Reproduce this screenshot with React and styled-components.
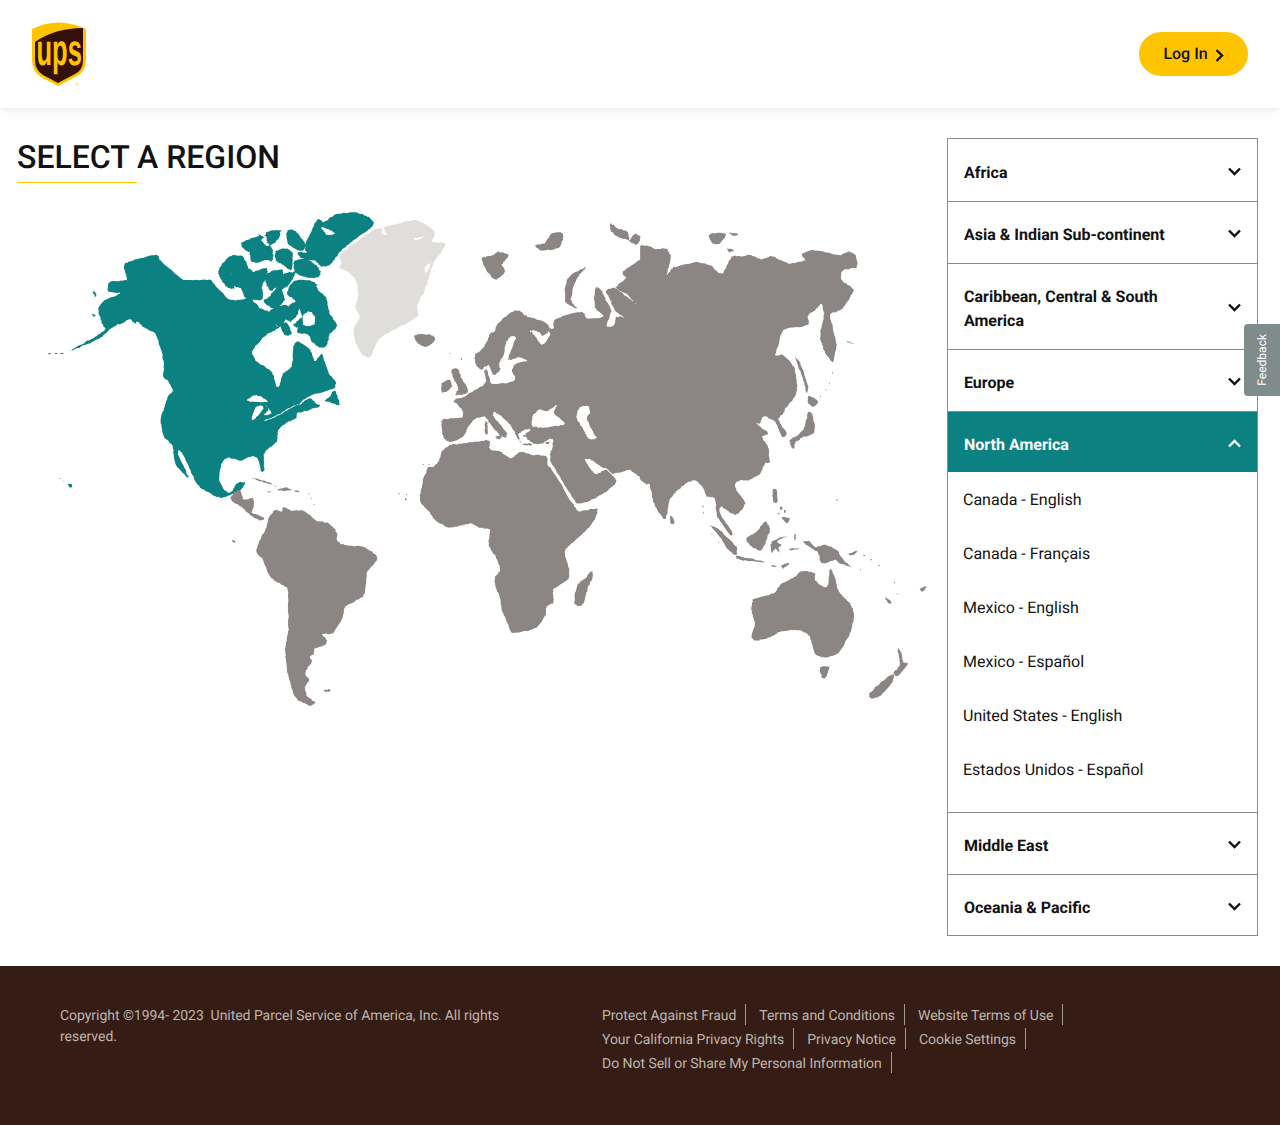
import React from "react";
import styled, { createGlobalStyle } from "styled-components";

const Global = createGlobalStyle`
  html, body { margin: 0; padding: 0; background: #fff; }
  body { font-family: Roboto, "Liberation Sans", sans-serif; color: #121212; text-rendering: geometricPrecision; }
  * { box-sizing: border-box; }
`;

const Page = styled.div`
  position: relative;
  width: 100%;
`;
const Header = styled.header`
  height: 108px;
  padding: 0 32px;
  display: flex;
  align-items: center;
  justify-content: space-between;
  background: #fff;
  box-shadow: 0 2px 8px rgba(0, 0, 0, 0.09);
`;
const Logo = styled.svg`
  display: block;
  width: 56px;
  height: 68px;
`;
const LoginButton = styled.a`
  width: 109px;
  height: 44px;
  border-radius: 22px;
  background: #ffc400;
  display: flex;
  align-items: center;
  justify-content: center;
  gap: 7px;
  font-size: 16px;
  font-weight: 500;
  color: #121212;
  padding-bottom: 2px;
  svg { margin-top: 5px; }
`;
const Main = styled.main`
  display: flex;
  justify-content: space-between;
  padding: 30px 22px 30px 17px;
`;
const MapColumn = styled.section`
  width: 920px;
`;
const Title = styled.h1`
  margin: 0 0 22px;
  font-size: 32px;
  line-height: 38px;
  font-weight: 500;
  color: #121212;
  &::after {
    content: "";
    display: block;
    width: 120px;
    height: 1px;
    background: #ffc400;
    margin-top: 6px;
  }
`;
const WorldMap = styled.svg`
  display: block;
  width: 920px;
  height: 510px;
`;
const Accordion = styled.div`
  width: 311px;
  border: 1px solid #8c8c8c;
`;
const ItemHead = styled.div`
  display: flex;
  align-items: center;
  justify-content: space-between;
  padding: ${(p) => p.$top}px 16px ${(p) => p.$bottom}px;
  background: ${(p) => (p.$open ? "#0b8181" : "#fff")};
  color: ${(p) => (p.$open ? "#fff" : "#121212")};
  border-bottom: ${(p) => (p.$open || p.$last ? "0" : "1px solid #8c8c8c")};
`;
const ItemLabel = styled.span`
  font-size: 16px;
  font-weight: 700;
  line-height: 24px;
  padding-right: 30px;
`;
const Chevron = styled.svg`
  flex: none;
  width: 13px;
  height: 9px;
  margin: 0 0 4px 0;
`;
const Countries = styled.ul`
  list-style: none;
  margin: 0;
  padding: 0 15px 16px;
  border-bottom: 1px solid #8c8c8c;
`;
const Country = styled.li`
  height: 54px;
  display: flex;
  align-items: center;
  font-size: 16px;
  color: #121212;
`;
const Feedback = styled.div`
  position: absolute;
  right: 0;
  top: 324px;
  width: 36px;
  height: 72px;
  background: #7f8c8b;
  border-radius: 4px 0 0 4px;
  display: flex;
  align-items: center;
  justify-content: center;
  color: #fff;
  font-size: 12px;
  span {
    writing-mode: vertical-rl;
    transform: rotate(180deg);
  }
`;
const Footer = styled.footer`
  height: 159px;
  background: #351c15;
  padding: 38px 60px 0;
  display: flex;
  color: #bdb5ae;
  font-size: 14px;
  letter-spacing: -0.04px;
`;
const Copyright = styled.p`
  margin: 2px 92px 0 0;
  width: 450px;
  line-height: 21px;
  white-space: pre-wrap;
`;
const FooterLinks = styled.nav`
  width: 618px;
  display: flex;
  flex-direction: column;
  gap: 3px;
`;
const FooterRow = styled.div`
  display: flex;
`;
const FooterLink = styled.a`
  height: 21px;
  padding-top: 2px;
  line-height: 21px;
  padding-right: 9px;
  margin-right: 13px;
  border-right: 1px solid #a39a94;
`;

/* ---- map data: every outline is traced, then softened so coasts look natural ---- */
let seed = 7;
const rand = () => {
  seed = (seed * 16807) % 2147483647;
  return seed / 2147483647 - 0.5;
};
const dist = (p, q) => Math.hypot(p[0] - q[0], p[1] - q[1]);
const subdivide = (pts, w0) => {
  const n = pts.length;
  const out = [];
  for (let i = 0; i < n; i++) {
    const a = pts[(i - 1 + n) % n], b = pts[i], c = pts[(i + 1) % n], e = pts[(i + 2) % n];
    const w = dist(a, b) < 70 && dist(b, c) < 70 && dist(c, e) < 70 ? w0 : 0;
    out.push(b);
    out.push([
      (0.5 + w) * (b[0] + c[0]) - w * (a[0] + e[0]),
      (0.5 + w) * (b[1] + c[1]) - w * (a[1] + e[1]),
    ]);
  }
  return out;
};
const soften = (d) => {
  if (!d.includes("L")) return d;
  return d
    .split(/(?=M)/)
    .map((sub) => {
      const nums = sub.match(/-?\d+(\.\d+)?/g).map(Number);
      let pts = [];
      for (let i = 0; i + 1 < nums.length; i += 2) pts.push([nums[i], nums[i + 1]]);
      pts = subdivide(pts, 0.05);
      pts = subdivide(pts, 0.05);
      pts = subdivide(pts, 0).map((p) => [p[0] + rand() * 3.2, p[1] + rand() * 3.2]);
      return "M" + pts.map((p) => p[0].toFixed(1) + "," + p[1].toFixed(1)).join(" L") + " Z";
    })
    .join(" ");
};

const F = "translate(20 200) scale(.33333)";
const A = "translate(400 320) scale(.33333)";
const B = "translate(400 200) scale(.345 .33333)";
const C = "translate(640 230) scale(.33333)";
const D = "translate(640 470) scale(.33333)";
const E = "translate(220 470) scale(.33333)";

const GREY = "#8b8584";
const TEAL = "#0b8181";
const WHITE = "#fff";
const ICE = "#e0deda";

const layers = [
  { t: A, fill: GREY, d: [
    "M150,365 L130,352 L125,320 L130,298 L185,293 L184,265 L160,242 L190,232 L205,222 L245,198 L258,182 L252,155 L262,150 L270,185 L285,192 L345,182 L335,150 L352,128 L382,122 L355,112 L325,120 L335,85 L347,55 L335,48 L320,65 L312,100 L298,130 L300,150 L280,165 L265,135 L245,148 L228,135 L225,105 L245,90 L262,60 L272,36 L800,36 L800,480 L720,470 L690,450 L640,462 L620,445 L605,442 L575,420 L556,418 L570,445 L590,462 L618,450 L650,482 L625,510 L590,532 L532,552 L500,505 L455,430 L450,418 L452,398 L460,362 L445,358 L425,372 L395,368 L375,345 L392,330 L375,328 L355,345 L365,370 L350,350 L335,320 L300,285 L282,277 L283,295 L318,335 L318,352 L300,345 L270,312 L255,290 L225,296 L205,320 L190,350 Z",
    "M150,375 L190,370 L260,360 L270,365 L270,388 L300,395 L335,415 L360,395 L400,405 L438,408 L445,440 L470,490 L505,535 L530,570 L545,578 L588,567 L585,600 L100,590 L62,545 L72,520 L68,490 L75,465 L115,425 L125,395 Z",
    "M42,48 L60,42 L95,45 L105,58 L95,72 L75,80 L55,70 L48,62 Z",
    "M155,150 L172,145 L185,175 L205,210 L195,222 L165,225 L175,205 L160,175 Z",
    "M125,190 L150,180 L155,200 L140,215 L125,215 Z",
    "M285,350 L305,350 L298,359 Z",
    "M255,308 L262,308 L263,340 L255,340 Z",
    "M370,371 L395,371 L395,375 L370,375 Z",
    "M435,368 L450,365 L445,373 Z",
    "M360,325 h8 v7 h-8z M370,345 h6 v5 h-6z M382,355 h4 v4 h-4z M148,98 h3 v3 h-3z M183,115 h3 v4 h-3z M68,432 h4 v2 h-4z M85,432 h4 v2 h-4z M15,535 h3 v3 h-3z",
  ]},
  { t: B, fill: GREY, d: [
    "M268,405 L285,370 L320,338 L345,332 L370,350 L420,365 L435,385 L445,385 L445,365 L465,350 L530,335 L540,355 L590,350 L565,320 L565,265 L582,268 L597,300 L612,335 L598,378 L620,376 L628,350 L650,352 L622,330 L606,290 L596,272 L622,264 L650,284 L685,312 L655,282 L625,262 L655,235 L645,215 L700,175 L700,140 L720,138 L745,150 L770,145 L785,175 L770,230 L800,260 L900,300 L900,405 Z",
    "M530,205 L538,205 L510,240 L495,300 L515,325 L490,315 L478,300 L485,235 Z",
    "M238,175 L270,165 L285,155 L315,165 L295,195 L305,215 L275,240 L245,200 Z",
    "M392,135 L420,130 L440,100 L472,100 L465,140 L430,150 L405,150 Z",
    "M610,70 L630,85 L660,95 L665,120 L680,100 L698,112 L685,135 L660,120 L630,110 L610,90 Z",
  ]},
  { t: C, fill: GREY, d: [
    "M0,50 L5,45 L35,60 L70,55 L90,80 L80,135 L100,112 L170,95 L210,105 L245,132 L275,80 L300,80 L330,75 L365,88 L395,78 L445,100 L490,92 L500,95 L485,72 L515,60 L600,75 L625,65 L645,75 L650,112 L610,120 L605,150 L640,180 L615,225 L600,240 L570,255 L590,345 L580,400 L550,355 L540,320 L552,250 L545,220 L525,240 L505,255 L505,285 L430,300 L405,375 L430,375 L450,395 L465,420 L472,470 L465,500 L440,530 L430,550 L415,570 L440,610 L425,620 L405,575 L370,560 L360,580 L348,580 L385,610 L365,620 L385,650 L390,700 L0,700 Z",
    "M465,380 L480,395 L505,470 L500,490 L490,450 Z",
    "M505,495 L535,515 L520,530 L505,520 Z",
    "M505,545 L520,560 L522,610 L490,620 L460,640 L450,630 L490,600 Z",
    "M450,640 L465,635 L460,658 Z",
    "M205,15 L240,8 L258,15 L240,40 L220,40 Z",
    "M268,8 L295,12 L280,18 Z",
    "M262,55 L282,62 L268,66 Z",
    "M620,333 L642,341 L625,338 Z",
    "M576,425 h2 v6 h-2z M568,458 h2 v5 h-2z M556,478 h3 v3 h-3z M540,498 h3 v3 h-3z",
  ]},
  { t: D, fill: GREY, d: [
    "M0,25 L20,42 L30,45 L40,95 L65,140 L78,145 L90,90 L125,50 L165,30 L190,55 L200,80 L225,85 L232,140 L270,195 L276,185 L240,130 L245,110 L285,135 L315,100 L290,60 L285,40 L305,30 L325,30 L360,10 L385,-40 L0,-40 Z",
    "M90,135 L100,145 L103,160 L92,160 Z",
    "M210,165 L240,180 L290,230 L290,255 L265,240 L235,195 Z",
    "M290,258 L340,268 L385,278 L340,275 L295,268 Z",
    "M395,285 L410,289 L400,291 Z M425,285 L450,280 L430,295 Z",
    "M318,205 L350,185 L375,155 L390,175 L385,195 L365,240 L335,230 Z",
    "M395,215 L440,198 L410,215 L425,225 L415,235 L420,250 L405,235 L395,250 Z",
    "M398,60 L410,60 L412,95 L400,95 Z",
    "M425,140 L450,145 L440,160 Z",
    "M490,215 L510,215 L525,232 L555,225 L590,240 L610,270 L635,292 L600,280 L585,270 L545,280 L535,250 L515,235 Z",
    "M462,195 L468,195 L465,215 Z M448,237 L480,235 L455,241 Z",
    "M625,252 L655,240 L640,256 Z",
    "M735,380 L755,398 L745,400 Z",
    "M840,358 L860,348 L848,365 Z",
    "M338,395 L345,385 L400,370 L420,345 L465,320 L485,303 L525,310 L525,330 L560,352 L572,295 L590,345 L600,370 L630,400 L642,435 L630,490 L595,550 L550,562 L525,550 L510,500 L490,485 L465,480 L420,485 L395,500 L350,512 L335,500 L345,460 L335,425 Z",
    "M540,592 L568,592 L555,625 L545,620 Z",
    "M772,535 L785,550 L790,578 L805,578 L790,600 L770,620 L762,605 L780,585 Z",
    "M760,612 L755,640 L720,678 L695,685 L688,672 L720,640 Z",
    "M420,110 h7 v9 h-7z M432,120 h5 v8 h-5z M414,128 h4 v5 h-4z M590,88 h3 v5 h-3z M660,298 h3 v3 h-3z M715,285 h4 v3 h-4z M762,335 h3 v5 h-3z M770,370 h3 v3 h-3z M188,105 h2 v8 h-2z M190,125 h2 v6 h-2z M215,190 h2 v4 h-2z M235,215 h2 v4 h-2z M670,255 h6 v3 h-6z M690,268 h5 v3 h-5z",
  ]},
  { t: E, fill: GREY, d: [
    "M600,90 L610,30 L625,-10 L990,-10 L1060,105 L1075,125 L1130,115 L1125,145 L1100,180 L1060,215 L1035,245 L1045,290 L1045,325 L1000,360 L1002,395 L980,410 L975,440 L945,475 L905,485 L875,488 L865,465 L845,420 L840,385 L825,345 L825,320 L840,300 L830,265 L805,225 L810,180 L775,172 L755,160 L715,168 L685,172 L645,150 L625,120 Z",
    "M1115,303 L1118,325 L1105,350 L1090,400 L1075,408 L1063,395 L1072,345 L1095,325 Z",
    "M140,170 L145,145 L165,120 L185,125 L190,112 L215,122 L250,122 L290,152 L325,160 L350,185 L350,205 L362,222 L400,228 L435,232 L472,262 L455,290 L440,310 L435,370 L415,388 L375,410 L370,435 L340,490 L305,490 L320,510 L315,525 L285,535 L282,552 L268,560 L275,575 L255,610 L268,630 L255,650 L262,680 L285,697 L270,708 L245,695 L225,680 L205,620 L197,560 L197,520 L205,480 L205,365 L200,352 L170,335 L150,320 L125,265 L110,250 L115,220 Z",
    "M95,25 L130,30 L170,50 L150,42 L110,30 Z",
    "M170,60 L195,52 L215,60 L190,62 Z",
    "M140,63 L155,65 L145,67 Z M225,62 L240,64 L225,66 Z",
    "M37,210 L48,215 L40,218 Z M312,660 L332,658 L328,665 L315,665 Z",
    "M265,70 h3 v3 h-3z M272,85 h3 v3 h-3z M280,102 h3 v3 h-3z M535,70 h4 v3 h-4z M555,87 h5 v4 h-5z M558,72 h3 v3 h-3z",
  ]},
  { t: A, fill: WHITE, d: [
    "M395,312 L400,285 L420,268 L440,275 L470,255 L462,280 L495,310 L470,318 L430,322 L400,320 Z",
    "M530,285 L540,262 L565,258 L570,280 L560,295 L585,345 L590,355 L565,355 L548,325 L530,295 Z",
    "M390,32 L415,35 L430,48 L445,35 L450,45 L432,72 L420,70 L400,42 Z",
  ]},
  { t: F, fill: ICE, d: [
    "M958,165 L1010,125 L1060,90 L1120,75 L1180,60 L1220,75 L1245,100 L1235,125 L1275,130 L1265,155 L1240,190 L1225,240 L1210,280 L1190,320 L1195,345 L1160,370 L1110,395 L1075,420 L1055,465 L1040,472 L1020,455 L1005,420 L1000,385 L1020,350 L1005,320 L1015,290 L1010,245 L985,215 L958,205 L965,185 Z",
  ]},
  { t: F, fill: TEAL, d: [
    "M150,453 L190,437 L240,415 L262,395 L280,380 L310,368 L330,358 L345,372 L352,365 L375,385 L405,400 L420,440 L432,490 L430,530 L455,565 L458,575 L443,590 L435,620 L422,655 L432,710 L458,738 L465,790 L500,830 L503,825 L475,765 L478,750 L495,775 L520,830 L535,858 L565,878 L600,893 L632,885 L660,872 L675,848 L650,850 L635,875 L615,872 L597,835 L605,790 L625,772 L660,782 L690,770 L713,775 L722,812 L733,812 L730,770 L740,750 L770,725 L775,690 L800,668 L828,655 L832,640 L860,632 L880,625 L900,618 L885,608 L872,596 L850,606 L835,618 L850,600 L868,588 L945,565 L948,545 L930,525 L915,490 L905,460 L885,485 L870,450 L835,425 L820,440 L815,500 L790,520 L778,558 L768,558 L762,530 L750,510 L708,482 L698,450 L740,405 L775,385 L790,370 L770,378 L745,335 L720,325 L690,295 L660,300 L625,298 L590,260 L570,240 L490,240 L425,185 L410,165 L345,180 L312,195 L320,240 L270,245 L265,275 L300,280 L255,300 L235,325 L240,350 L250,380 L258,385 L230,408 L185,432 Z",
    "M945,572 L958,615 L930,606 L915,602 L928,590 Z",
    "M745,335 L790,315 L808,325 L790,370 L770,378 Z",
    "M218,272 L230,282 L225,290 Z M215,342 L228,345 L220,350 Z",
    "M85,460 h8 v3 h-8z M105,459 h6 v3 h-6z M122,459 h8 v3 h-8z",
    "M145,852 L155,852 L155,862 L148,862 Z",
    "M118,835 h3 v2 h-3z M130,842 h3 v2 h-3z",
    "M780,375 L800,368 L815,400 L795,405 Z",
  ]},
  { t: F, fill: TEAL, stroke: TEAL, strokeWidth: 7, d: [
    "M910,72 L945,48 L1000,40 L1040,52 L1058,72 L1030,95 L990,125 L960,150 L930,190 L905,195 L890,180 L870,165 L858,140 L875,100 L895,62 Z",
    "M828,185 L860,182 L892,205 L895,228 L855,228 L828,212 Z",
    "M835,160 L880,165 L890,175 L860,178 Z",
    "M600,210 L630,172 L665,172 L680,205 L650,205 L628,225 L640,258 L625,260 L605,235 Z",
    "M632,232 L655,208 L685,208 L700,220 L738,208 L730,240 L722,262 L725,295 L700,295 L680,292 L670,272 L665,262 L635,250 Z",
    "M668,130 L722,110 L712,130 L690,150 L680,148 Z",
    "M695,150 L720,125 L735,140 L752,145 L755,178 L735,175 L715,185 L695,178 Z",
    "M742,100 L775,95 L772,115 L752,130 L745,120 Z",
    "M805,95 L825,97 L850,130 L848,148 L825,142 L805,125 Z",
    "M770,155 L800,150 L815,165 L812,205 L790,190 L772,180 Z",
    "M740,225 L785,212 L778,245 L755,268 L745,255 Z",
    "M785,228 L822,220 L800,255 L772,270 L778,245 Z",
    "M752,292 L778,262 L790,300 L765,322 L735,305 Z",
    "M795,345 L815,315 L835,312 L830,340 L810,360 Z",
    "M805,280 L825,245 L880,248 L890,272 L915,295 L925,340 L948,378 L925,400 L920,428 L905,440 L880,425 L865,400 L835,395 L840,380 L825,375 L850,350 L835,310 L820,290 Z",
  ]},
  { t: F, fill: WHITE, d: [
    "M850,345 L868,335 L885,350 L880,375 L850,375 Z",
    "M680,600 L710,585 L745,605 L715,605 L695,605 Z",
    "M695,655 L710,620 L730,620 L720,640 L700,660 Z",
    "M735,615 L755,640 L730,645 L745,630 Z",
    "M730,662 L780,642 L800,628 L835,612 L800,632 L765,652 Z",
    "M905,80 L945,100 L925,105 L915,100 Z",
    "M405,480 L415,485 L412,512 L405,505 Z",
    "M428,535 L445,545 L460,575 L450,565 Z",
    "M1180,115 L1215,110 L1190,120 Z",
    "M1195,320 L1210,280 L1200,330 Z",
    "M1090,80 L1100,105 L1085,100 Z",
    "M1215,200 L1232,190 L1218,220 Z",
  ]},
  { t: E, fill: GREY, d: [
    "M32,85 L45,65 L62,62 L70,88 L100,85 L100,110 L95,128 L115,135 L135,145 L118,150 L90,135 L65,110 L45,100 Z",
  ]},
].map((l) => ({ ...l, d: l.d.map(soften) }));

const Down = () => (
  <Chevron viewBox="0 0 13 9">
    <path d="M1 1.5 L6.5 7 L12 1.5" fill="none" stroke="#121212" strokeWidth="2.4" />
  </Chevron>
);
const Up = () => (
  <Chevron viewBox="0 0 13 9">
    <path d="M1 7.5 L6.5 2 L12 7.5" fill="none" stroke="#fff" strokeWidth="2.4" />
  </Chevron>
);

const regions = [
  { name: "Africa", top: 22, bottom: 16 },
  { name: "Asia & Indian Sub-continent", top: 21, bottom: 16 },
  { name: "Caribbean, Central & South America", top: 21, bottom: 16 },
  { name: "Europe", top: 21, bottom: 16 },
  { name: "North America", top: 21, bottom: 15, open: true },
  { name: "Middle East", top: 21, bottom: 16 },
  { name: "Oceania & Pacific", top: 21, bottom: 15, last: true },
];
const countries = [
  "Canada - English",
  "Canada - Français",
  "Mexico - English",
  "Mexico - Español",
  "United States - English",
  "Estados Unidos - Español",
];
const footerRows = [
  ["Protect Against Fraud", "Terms and Conditions", "Website Terms of Use"],
  ["Your California Privacy Rights", "Privacy Notice", "Cookie Settings"],
  ["Do Not Sell or Share My Personal Information"],
];

export default function App() {
  return (
    <Page>
      <Global />
      <Header>
        <Logo viewBox="32 20 56 68" aria-label="UPS">
          <path d="M32 29 Q58 16 86 29 L86 60 Q86 71 77 76 L58 86 L41 77 Q32 71 32 60 Z" fill="#ffc400" />
          <path d="M35 42 Q55 28 83 28 L83 60 Q83 70 75 74 L58 83 L43 75 Q35 70 35 60 Z" fill="#351008" />
          <text transform="translate(36.5 65) scale(.58 1)" fontFamily="Liberation Sans" fontWeight="700" fontSize="44" fill="#ffc400">ups</text>
          <text x="75" y="85.5" fontFamily="Liberation Sans" fontSize="5" fill="#ffd95e">®</text>
        </Logo>
        <LoginButton>
          Log In
          <svg width="9" height="13" viewBox="0 0 9 13">
            <path d="M1.5 1 L7 6.5 L1.5 12" fill="none" stroke="#121212" strokeWidth="2.4" />
          </svg>
        </LoginButton>
      </Header>
      <Main>
        <MapColumn>
          <Title>SELECT A REGION</Title>
          <WorldMap viewBox="17 205 920 510">
            {layers.map((l, i) => (
              <g key={i} transform={l.t} fill={l.fill} stroke={l.stroke} strokeWidth={l.strokeWidth}>
                {l.d.map((d, j) => (
                  <path key={j} d={d} />
                ))}
              </g>
            ))}
          </WorldMap>
        </MapColumn>
        <Accordion>
          {regions.map((r) => (
            <React.Fragment key={r.name}>
              <ItemHead $top={r.top} $bottom={r.bottom} $open={r.open} $last={r.last}>
                <ItemLabel>{r.name}</ItemLabel>
                {r.open ? <Up /> : <Down />}
              </ItemHead>
              {r.open && (
                <Countries>
                  {countries.map((c) => (
                    <Country key={c}>{c}</Country>
                  ))}
                </Countries>
              )}
            </React.Fragment>
          ))}
        </Accordion>
      </Main>
      <Feedback>
        <span>Feedback</span>
      </Feedback>
      <Footer>
        <Copyright>Copyright ©1994- 2023  United Parcel Service of America, Inc. All rights reserved.</Copyright>
        <FooterLinks>
          {footerRows.map((row, i) => (
            <FooterRow key={i}>
              {row.map((t) => (
                <FooterLink key={t}>{t}</FooterLink>
              ))}
            </FooterRow>
          ))}
        </FooterLinks>
      </Footer>
    </Page>
  );
}
